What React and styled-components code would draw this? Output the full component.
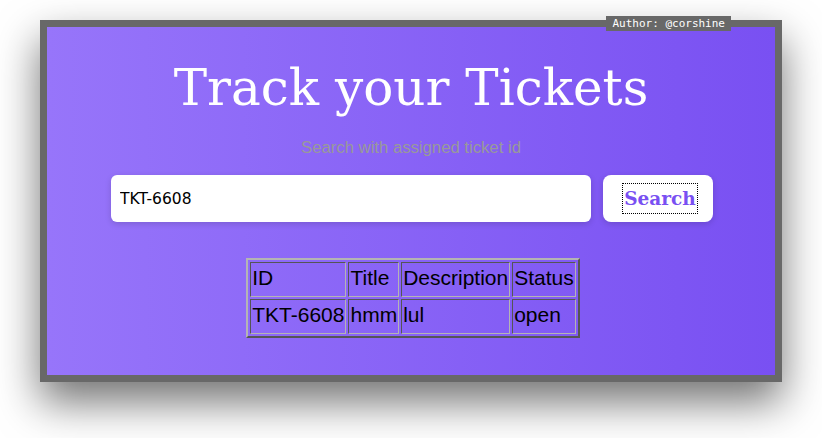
import React from 'react'
import styled, { createGlobalStyle } from 'styled-components'

const GlobalStyle = createGlobalStyle`
    html, body {
        margin: 0;
        background-color: #fff;
        font-family: "DejaVu Serif", serif;
    }
`

const Page = styled.div`
    min-height: 438px;
    box-sizing: border-box;
    padding: 20px 40px;
`

const Frame = styled.main`
    position: relative;
    width: 728px;
    height: 348px;
    border: 7px solid #686868;
    background: linear-gradient(to right, #9775fa, #7950f2);
    box-shadow: 0 20px 40px rgba(0,0,0,0.55);
    display: flex;
    flex-direction: column;
    align-items: center;
`

const Badge = styled.span`
    position: absolute;
    top: -11px;
    right: 44px;
    background-color: #686868;
    color: #fff;
    font-family: "DejaVu Sans Mono", monospace;
    font-size: 11px;
    line-height: 15px;
    padding: 0 6px;
`

const Title = styled.h1`
    margin: 31px 0 0;
    font-family: "DejaVu Serif", serif;
    font-weight: normal;
    font-size: 50px;
    line-height: 60px;
    color: #fff;
`

const Hint = styled.p`
    margin: 20px 0 0;
    font-family: "Liberation Sans", Arial, sans-serif;
    font-size: 16.7px;
    color: #999;
`

const SearchRow = styled.div`
    display: flex;
    gap: 12px;
    margin-top: 17px;
    margin-left: 2px;
`

const Input = styled.input`
    width: 480px;
    height: 47px;
    box-sizing: border-box;
    border: none;
    border-radius: 6px;
    padding: 0 9px;
    font-family: "DejaVu Sans", sans-serif;
    font-size: 15.5px;
    color: #000;
    box-shadow: 0 2px 6px rgba(0,0,0,0.15);
    outline: none;
`

const Button = styled.button`
    width: 110px;
    height: 47px;
    border: none;
    border-radius: 8px;
    background-color: #fff;
    box-shadow: 0 2px 6px rgba(0,0,0,0.15);
    display: flex;
    align-items: center;
    justify-content: center;
    cursor: pointer;
`

const ButtonLabel = styled.span`
    font-family: "DejaVu Serif", serif;
    font-weight: bold;
    font-size: 18.5px;
    color: #7950f2;
    border: 1px dotted #000;
    padding: 4px 1px;
    margin-left: 4px;
`

const Table = styled.table`
    margin-top: 36px;
    margin-left: 4px;
    border-style: solid;
    border-width: 2px;
    border-color: #b4b4b4 #555 #555 #b4b4b4;
    border-spacing: 2px;
    font-family: "Liberation Sans", Arial, sans-serif;
    font-size: 21px;
    color: #000;
`

const Cell = styled.td`
    border-style: solid;
    border-width: 1px;
    border-color: #555 #b4b4b4 #b4b4b4 #555;
    padding: 3px 1px 6px;
    text-align: left;
`

const tickets = [
    { id: 'TKT-6608', title: 'hmm', description: 'lul', status: 'open' },
]

const App = () => {
    return (
        <Page>
            <GlobalStyle />
            <Frame>
                <Badge>Author: @corshine</Badge>
                <Title>Track your Tickets</Title>
                <Hint>Search with assigned ticket id</Hint>
                <SearchRow>
                    <Input defaultValue="TKT-6608" />
                    <Button><ButtonLabel>Search</ButtonLabel></Button>
                </SearchRow>
                <Table>
                    <tbody>
                        <tr>
                            <Cell>ID</Cell>
                            <Cell>Title</Cell>
                            <Cell>Description</Cell>
                            <Cell>Status</Cell>
                        </tr>
                        {tickets.map(t => (
                            <tr key={t.id}>
                                <Cell>{t.id}</Cell>
                                <Cell>{t.title}</Cell>
                                <Cell>{t.description}</Cell>
                                <Cell>{t.status}</Cell>
                            </tr>
                        ))}
                    </tbody>
                </Table>
            </Frame>
        </Page>
    )
}

export default App
